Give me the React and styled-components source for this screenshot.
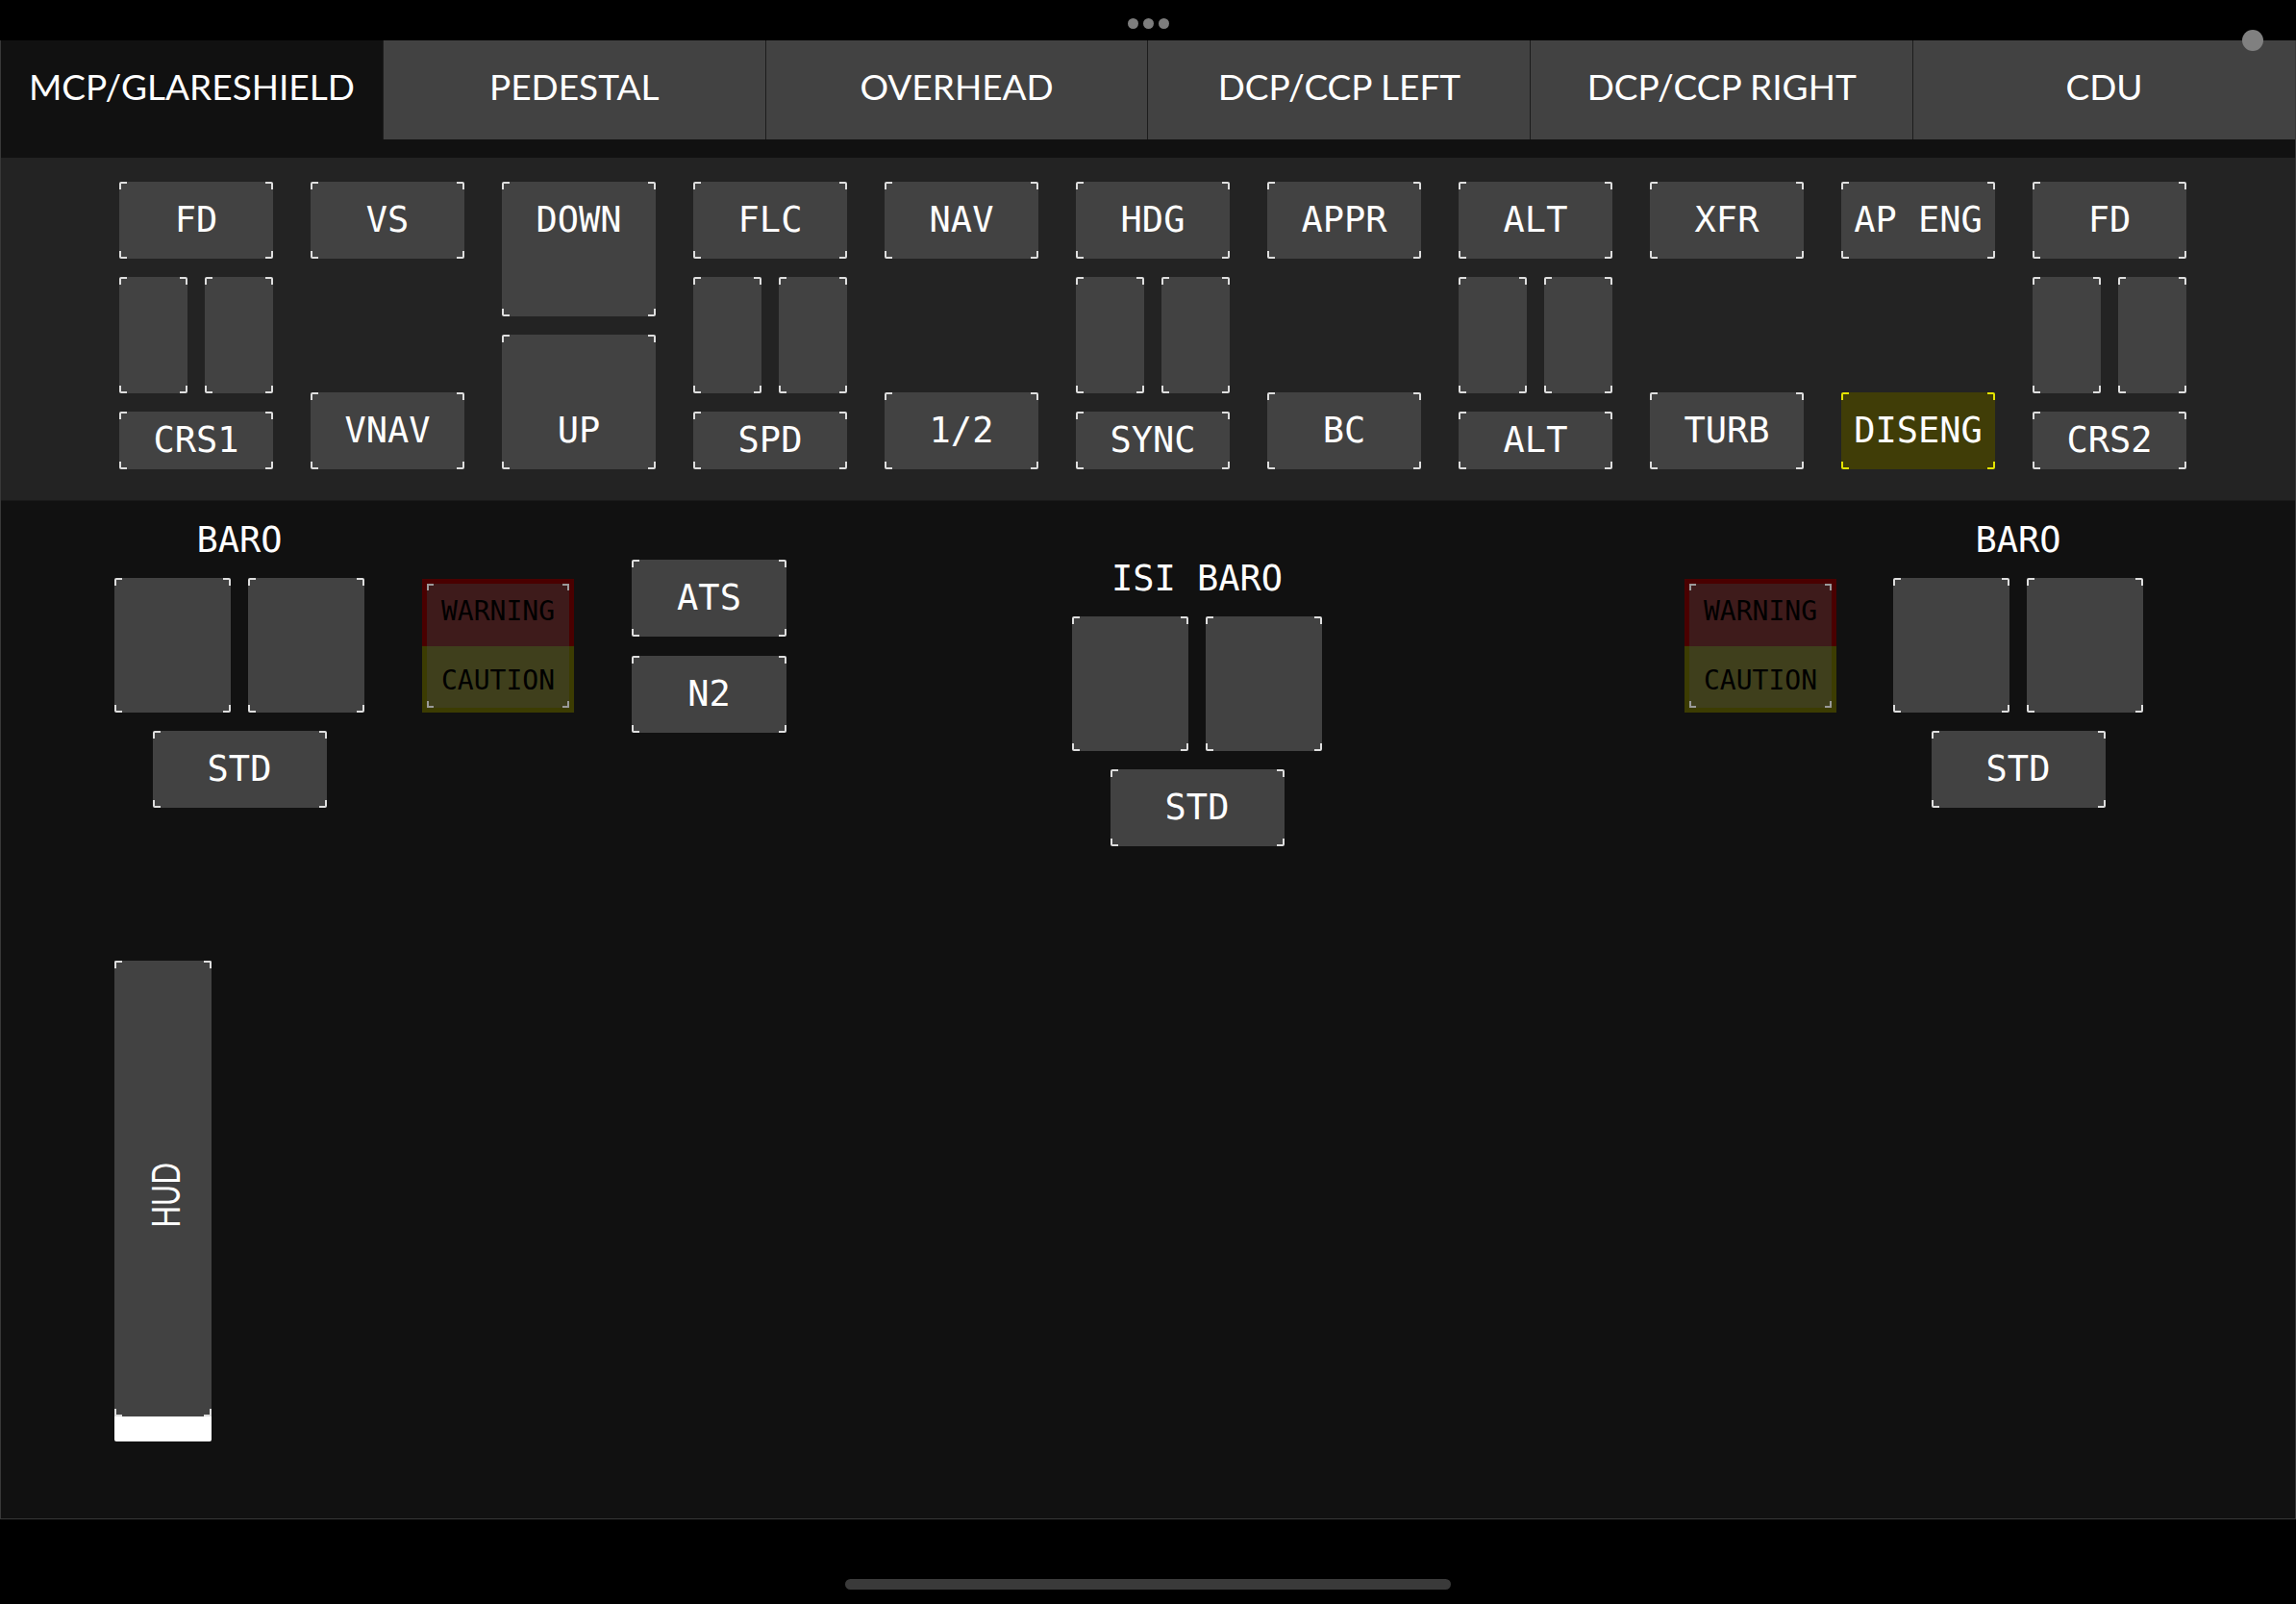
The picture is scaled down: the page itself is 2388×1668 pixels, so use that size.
import React from 'react'
import styled, { createGlobalStyle, css } from 'styled-components'

const GlobalStyle = createGlobalStyle`
  html, body { margin: 0; padding: 0; background: #000; }
  * { box-sizing: border-box; }
`

// little white brackets in each corner of a key
const corners = (c, len = 8, w = 2) => css`
  background-image: ${Array(8).fill(`linear-gradient(${c}, ${c})`).join(', ')};
  background-repeat: no-repeat;
  background-size: ${len}px ${w}px, ${w}px ${len}px, ${len}px ${w}px, ${w}px ${len}px,
    ${len}px ${w}px, ${w}px ${len}px, ${len}px ${w}px, ${w}px ${len}px;
  background-position: left top, left top, right top, right top,
    left bottom, left bottom, right bottom, right bottom;
`

const Screen = styled.div`
  position: relative;
  width: 2388px;
  height: 1668px;
  background: #000;
  display: flex;
  flex-direction: column;
  overflow: hidden;
`

const StatusBar = styled.div`
  flex: none;
  height: 42px;
  padding-top: 6px;
  display: flex;
  justify-content: center;
  align-items: center;
  gap: 5px;
`

const Dot = styled.span`
  width: 11px;
  height: 11px;
  border-radius: 50%;
  background: #7d7d7d;
`

const CameraDot = styled.span`
  position: absolute;
  left: 2332px;
  top: 31px;
  width: 22px;
  height: 22px;
  border-radius: 50%;
  background: #808080;
  z-index: 2;
`

const Main = styled.div`
  flex: none;
  height: 1538px;
  display: flex;
  flex-direction: column;
  background: #111;
  border: 1px solid #383838;
  border-top: none;
`

const TabBar = styled.div`
  flex: none;
  height: 103px;
  margin-bottom: 19px;
  display: flex;
`

const Tab = styled.div`
  flex: 1;
  display: flex;
  align-items: center;
  justify-content: center;
  padding-bottom: 8px;
  background: ${p => (p.$active ? '#111' : '#424242')};
  color: #fff;
  font-family: Lato, "Open Sans", sans-serif;
  font-size: 37px;
  & + & {
    border-left: 1px solid #1c1c1c;
  }
`

const TopPanel = styled.div`
  flex: none;
  height: 357px;
  padding: 25px 0 0 123px;
  display: flex;
  gap: 39px;
  background: #232323;
  border-bottom: 1px solid #1a1a1a;
`

const Column = styled.div`
  width: 160px;
  height: 299px;
  display: flex;
  flex-direction: column;
  justify-content: ${p => (p.$spread ? 'space-between' : 'flex-start')};
  gap: ${p => (p.$spread ? 0 : 19)}px;
`

const Key = styled.div`
  flex: none;
  width: ${p => p.$w}px;
  height: ${p => p.$h}px;
  display: flex;
  justify-content: center;
  align-items: ${p => (p.$align === 'top' ? 'flex-start' : p.$align === 'bottom' ? 'flex-end' : 'center')};
  border-radius: 2px;
  background-color: ${p => (p.$lit ? '#403d07' : '#424242')};
  ${p => corners(p.$lit ? '#e4e400' : '#dedede')}
  color: #fff;
  font-family: "DejaVu Sans Mono", "Liberation Mono", monospace;
  font-size: 37px;
  white-space: pre;
`

const KeyText = styled.span`
  line-height: ${p => p.$lh || 80}px;
`

const SplitRow = styled.div`
  display: flex;
  gap: ${p => p.$gap || 18}px;
`

const Lower = styled.div`
  flex: 1;
  padding-left: 118px;
  display: flex;
  flex-direction: column;
  align-items: flex-start;
`

const Row = styled.div`
  display: flex;
  align-items: flex-start;
`

const Group = styled.div`
  width: 260px;
  display: flex;
  flex-direction: column;
  align-items: center;
  margin-top: ${p => p.$mt}px;
  margin-left: ${p => p.$ml || 0}px;
`

const GroupLabel = styled.div`
  color: #fff;
  font-family: "DejaVu Sans Mono", "Liberation Mono", monospace;
  font-size: 37px;
  line-height: 37px;
  white-space: pre;
  margin-bottom: 21px;
`

const Stack = styled.div`
  display: flex;
  flex-direction: column;
  gap: ${p => p.$gap}px;
  margin-top: ${p => p.$mt}px;
  margin-left: ${p => p.$ml}px;
`

const Annunciator = styled.div`
  position: relative;
  width: 158px;
  height: 139px;
  display: flex;
  flex-direction: column;
  margin-top: ${p => p.$mt}px;
  margin-left: ${p => p.$ml}px;
  &::after {
    content: '';
    position: absolute;
    inset: 5px;
    ${corners('#9a9a9a', 7, 2)}
  }
`

const Lamp = styled.div`
  flex: 1;
  display: flex;
  align-items: center;
  justify-content: center;
  background: ${p => p.$fill};
  border: 5px solid ${p => p.$frame};
  border-${p => p.$open}: none;
  padding-${p => p.$open}: 8px;
  color: #000;
  font-family: "DejaVu Sans Mono", "Liberation Mono", monospace;
  font-size: 28px;
`

const Hud = styled.div`
  margin-top: 119px;
  width: 101px;
  height: 500px;
  display: flex;
  flex-direction: column;
  border-radius: 2px;
  overflow: hidden;
`

const HudBody = styled.div`
  flex: 1;
  display: flex;
  align-items: center;
  justify-content: center;
  padding-top: 14px;
  background-color: #424242;
  ${corners('#dedede')}
`

const HudText = styled.span`
  writing-mode: vertical-rl;
  transform: rotate(180deg) scaleX(1.38);
  color: #fff;
  font-family: Lato, "Open Sans", sans-serif;
  font-size: 30px;
`

const HudFill = styled.div`
  height: 26px;
  background: #fff;
`

const HomeArea = styled.div`
  flex: 1;
  display: flex;
  justify-content: center;
  padding-top: 62px;
`

const HomeBar = styled.div`
  width: 630px;
  height: 11px;
  border-radius: 6px;
  background: #3a3a3a;
`

const tabs = ['MCP/GLARESHIELD', 'PEDESTAL', 'OVERHEAD', 'DCP/CCP LEFT', 'DCP/CCP RIGHT', 'CDU']

const columns = [
  { type: 'split', top: 'FD', bottom: 'CRS1' },
  { type: 'pair', top: 'VS', bottom: 'VNAV' },
  { type: 'tall', top: 'DOWN', bottom: 'UP' },
  { type: 'split', top: 'FLC', bottom: 'SPD' },
  { type: 'pair', top: 'NAV', bottom: '1/2' },
  { type: 'split', top: 'HDG', bottom: 'SYNC' },
  { type: 'pair', top: 'APPR', bottom: 'BC' },
  { type: 'split', top: 'ALT', bottom: 'ALT' },
  { type: 'pair', top: 'XFR', bottom: 'TURB' },
  { type: 'pair', top: 'AP ENG', bottom: 'DISENG', lit: true },
  { type: 'split', top: 'FD', bottom: 'CRS2' },
]

const PanelColumn = ({ col }) => {
  if (col.type === 'tall') {
    return (
      <Column>
        <Key $w={160} $h={140} $align="top"><KeyText>{col.top}</KeyText></Key>
        <Key $w={160} $h={140} $align="bottom"><KeyText>{col.bottom}</KeyText></Key>
      </Column>
    )
  }
  if (col.type === 'pair') {
    return (
      <Column $spread>
        <Key $w={160} $h={80}><KeyText>{col.top}</KeyText></Key>
        <Key $w={160} $h={80} $lit={col.lit}><KeyText>{col.bottom}</KeyText></Key>
      </Column>
    )
  }
  return (
    <Column>
      <Key $w={160} $h={80}><KeyText>{col.top}</KeyText></Key>
      <SplitRow>
        <Key $w={71} $h={121} />
        <Key $w={71} $h={121} />
      </SplitRow>
      <Key $w={160} $h={60}><KeyText $lh={60}>{col.bottom}</KeyText></Key>
    </Column>
  )
}

const BaroGroup = ({ label, mt, ml }) => (
  <Group $mt={mt} $ml={ml}>
    <GroupLabel>{label}</GroupLabel>
    <SplitRow>
      <Key $w={121} $h={140} />
      <Key $w={121} $h={140} />
    </SplitRow>
    <Key $w={181} $h={80} style={{ marginTop: 19 }}><KeyText>STD</KeyText></Key>
  </Group>
)

const WarnCaution = ({ ml }) => (
  <Annunciator $mt={81} $ml={ml}>
    <Lamp $fill="#3e1b1b" $frame="#4a0000" $open="bottom">WARNING</Lamp>
    <Lamp $fill="#3f3f1c" $frame="#3c3c02" $open="top">CAUTION</Lamp>
  </Annunciator>
)

export default function App() {
  return (
    <>
      <GlobalStyle />
      <Screen>
        <StatusBar>
          <Dot />
          <Dot />
          <Dot />
        </StatusBar>
        <CameraDot />
        <Main>
          <TabBar>
            {tabs.map((t, i) => (
              <Tab key={t} $active={i === 0}>{t}</Tab>
            ))}
          </TabBar>
          <TopPanel>
            {columns.map((c, i) => (
              <PanelColumn key={i} col={c} />
            ))}
          </TopPanel>
          <Lower>
            <Row>
              <BaroGroup label="BARO" mt={22} />
              <WarnCaution ml={60} />
              <Stack $gap={20} $mt={61} $ml={60}>
                <Key $w={161} $h={80}><KeyText>ATS</KeyText></Key>
                <Key $w={161} $h={80}><KeyText>N2</KeyText></Key>
              </Stack>
              <BaroGroup label="ISI BARO" mt={62} ml={297} />
              <WarnCaution ml={377} />
              <BaroGroup label="BARO" mt={22} ml={59} />
            </Row>
            <Hud>
              <HudBody>
                <HudText>HUD</HudText>
              </HudBody>
              <HudFill />
            </Hud>
          </Lower>
        </Main>
        <HomeArea>
          <HomeBar />
        </HomeArea>
      </Screen>
    </>
  )
}
